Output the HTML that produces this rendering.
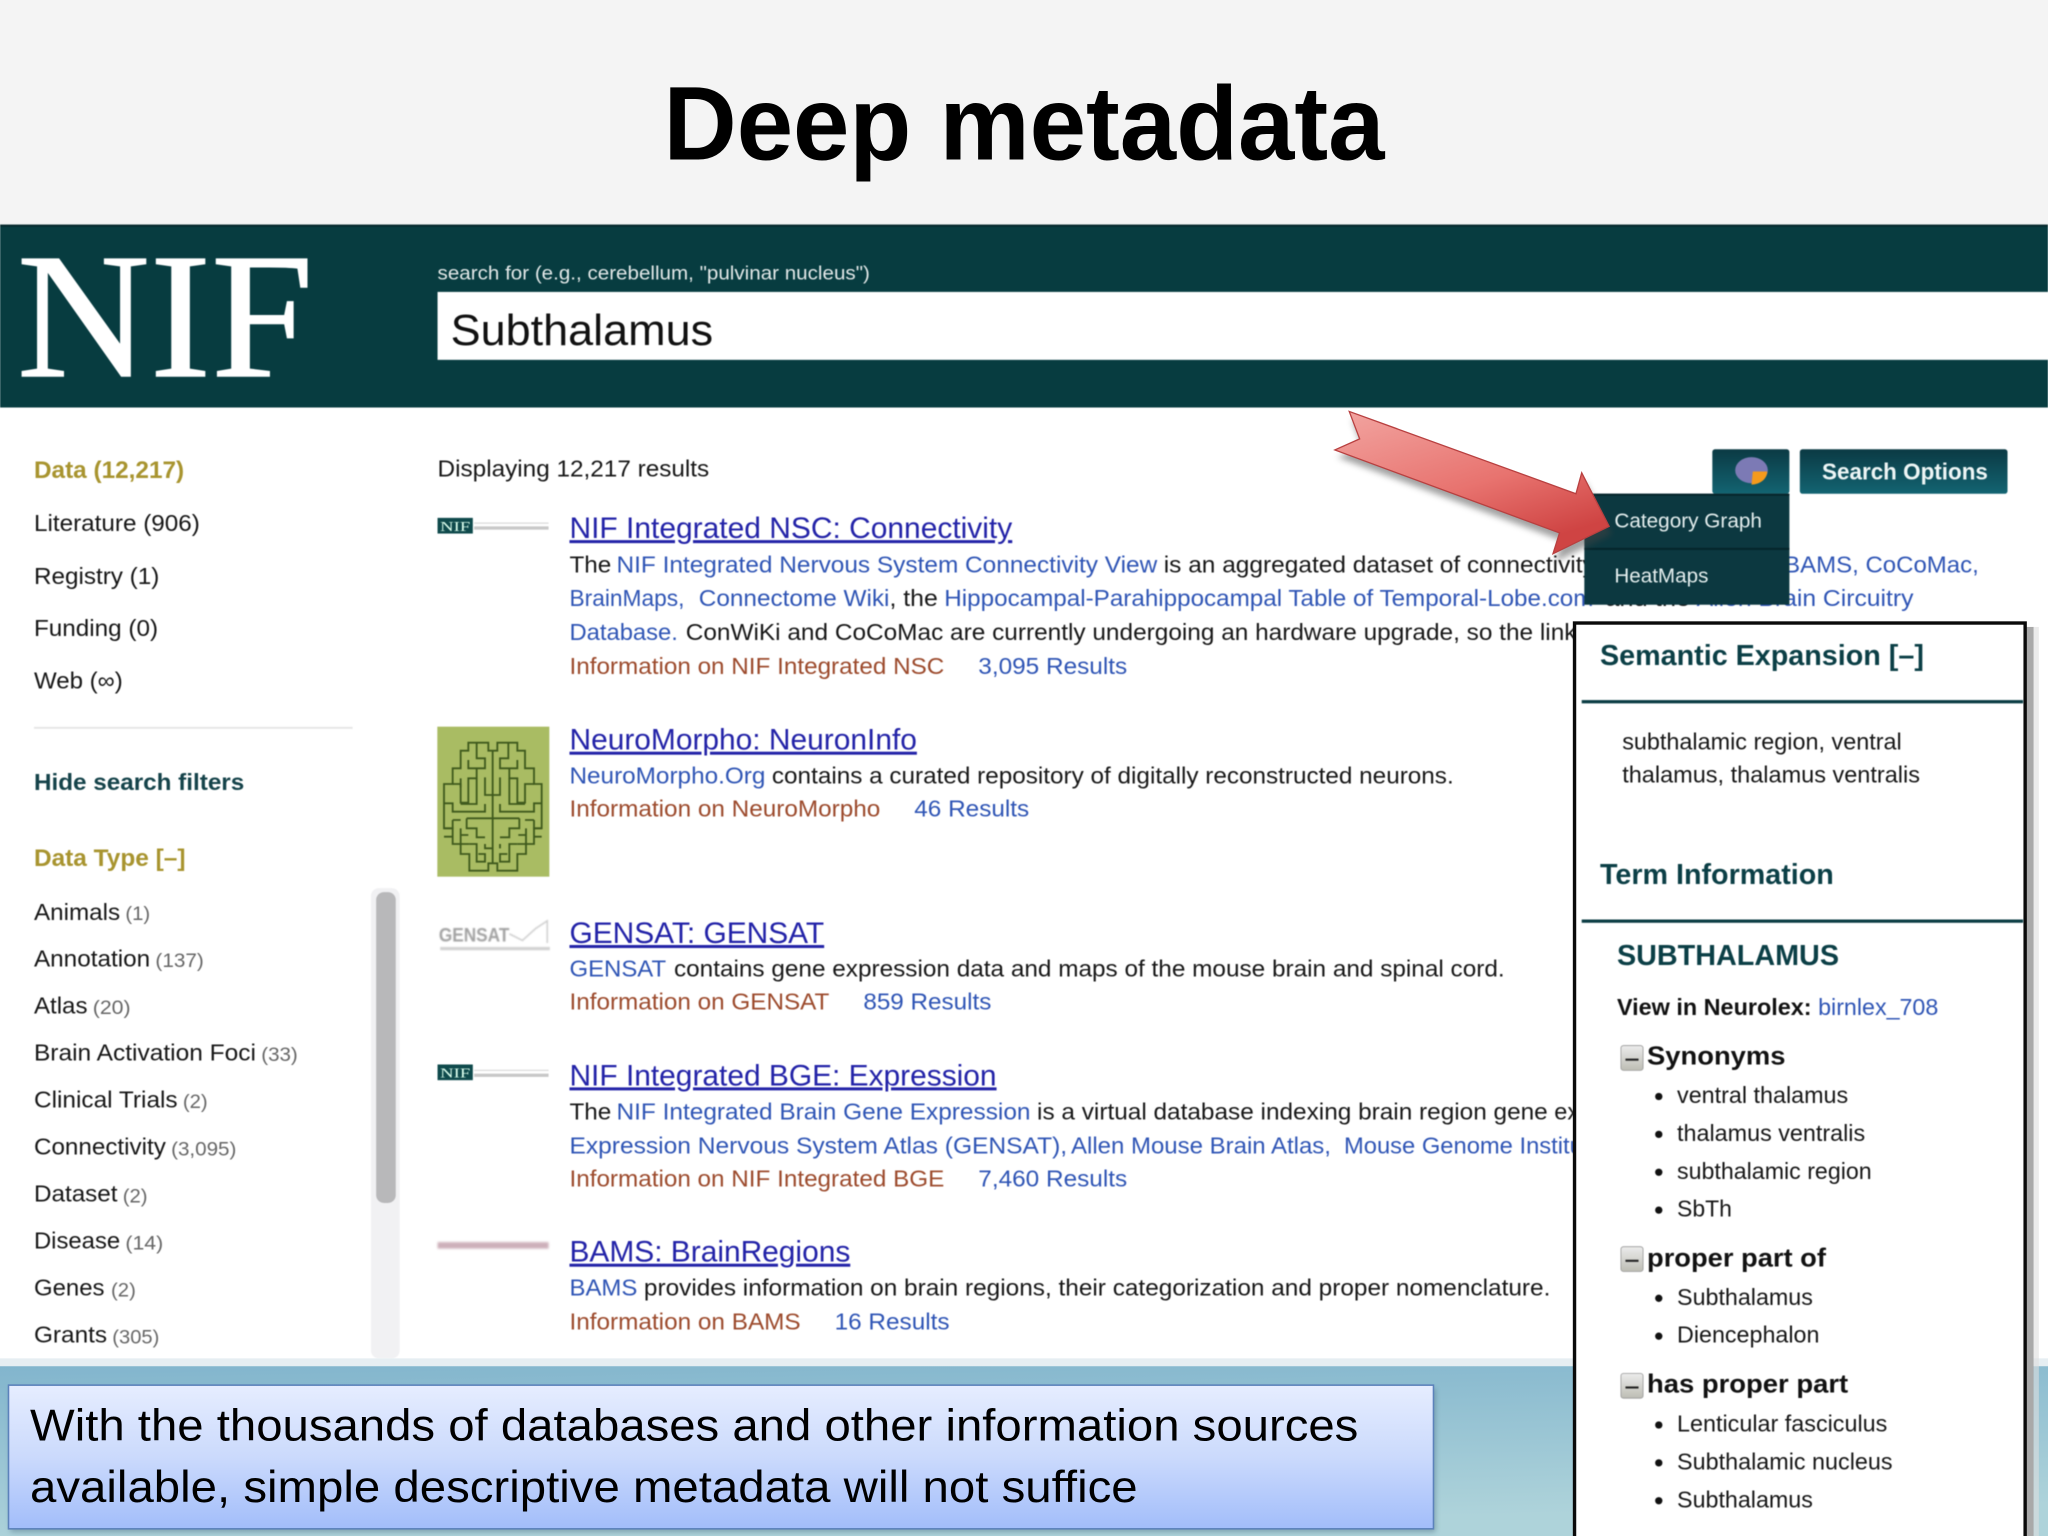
<!DOCTYPE html>
<html><head><meta charset="utf-8"><title>Deep metadata</title>
<style>
html,body{margin:0;padding:0;background:#fff;width:2048px;height:1536px;overflow:hidden}
svg{display:block;font-family:"Liberation Sans",sans-serif}
.t{font-size:18px;fill:#171717}
.b{font-size:18px;fill:#2f55b5}
.r{font-size:18px;fill:#9c4a2c}
.h{font-size:23px;fill:#2323a8;text-decoration:underline}
.g{font-size:15px;fill:#666}
.s{font-size:18px;fill:#161616}
.y{font-size:18.5px;font-weight:bold;fill:#a8942f}
.k{font-weight:bold;fill:#0b3f46;font-size:22px}
.m{font-weight:bold;fill:#111;font-size:20px}
</style></head><body>
<svg xmlns="http://www.w3.org/2000/svg" width="2048" height="1536" viewBox="0 0 1568 1176">
<defs>
<linearGradient id="bg" x1="0" y1="0" x2="0.25" y2="1"><stop offset="0" stop-color="#82b5cd"/><stop offset="1" stop-color="#aed3da"/></linearGradient>
<linearGradient id="box" x1="0" y1="0" x2="0" y2="1"><stop offset="0" stop-color="#e6edff"/><stop offset="0.5" stop-color="#cbdafc"/><stop offset="1" stop-color="#a2bdfa"/></linearGradient>
<linearGradient id="btn" x1="0" y1="0" x2="0" y2="1"><stop offset="0" stop-color="#0b3a44"/><stop offset="1" stop-color="#136472"/></linearGradient>
<linearGradient id="arr" x1="0" y1="0" x2="0.6" y2="1"><stop offset="0" stop-color="#f2a5a1"/><stop offset="0.6" stop-color="#e8736f"/><stop offset="1" stop-color="#cf4443"/></linearGradient>
<linearGradient id="tog" x1="0" y1="0" x2="0" y2="1"><stop offset="0" stop-color="#ececec"/><stop offset="1" stop-color="#bdbdb4"/></linearGradient>
</defs>

<rect width="1568" height="1176" fill="#fff"/>
<rect width="1568" height="172" fill="#f4f4f4"/>
<text x="508" y="122" font-size="80" font-weight="bold" fill="#000" textLength="552" lengthAdjust="spacingAndGlyphs">Deep metadata</text>

<g style="filter:blur(.45px)">
<rect y="172" width="1568" height="140" fill="#073c40"/>
<rect y="172" width="1568" height="1.5" fill="#06282c"/>
<text x="13" y="288" font-family="Liberation Serif" font-size="137" fill="#fff" stroke="#fff" stroke-width="1" textLength="227" lengthAdjust="spacingAndGlyphs">NIF</text>
<text x="335" y="214" font-size="15" fill="#e2e8e8" textLength="331" lengthAdjust="spacingAndGlyphs">search for (e.g., cerebellum, "pulvinar nucleus")</text>
<rect x="335" y="223.500" width="1233" height="52" fill="#fff"/>
<text x="345" y="264" font-size="33.500" fill="#111" textLength="201" lengthAdjust="spacingAndGlyphs">Subthalamus</text>

<!-- sidebar -->
<text x="26" y="366" class="y" textLength="115" lengthAdjust="spacingAndGlyphs">Data (12,217)</text>
<text x="26" y="406.500" class="s" textLength="127" lengthAdjust="spacingAndGlyphs">Literature (906)</text>
<text x="26" y="447" class="s" textLength="96" lengthAdjust="spacingAndGlyphs">Registry (1)</text>
<text x="26" y="487" class="s" textLength="95" lengthAdjust="spacingAndGlyphs">Funding (0)</text>
<text x="26" y="527" class="s" textLength="68" lengthAdjust="spacingAndGlyphs">Web (∞)</text>
<rect x="26" y="556.500" width="244" height="1.500" fill="#e6e6e6"/>
<text x="26" y="605" font-size="18" font-weight="bold" fill="#15434a" textLength="161" lengthAdjust="spacingAndGlyphs">Hide search filters</text>
<text x="26" y="663" class="y" textLength="116" lengthAdjust="spacingAndGlyphs">Data Type [–]</text>

<text x="26" y="704.500" class="s" textLength="66" lengthAdjust="spacingAndGlyphs">Animals</text><text x="96" y="704.500" class="g" textLength="19" lengthAdjust="spacingAndGlyphs">(1)</text>
<text x="26" y="740" class="s" textLength="89" lengthAdjust="spacingAndGlyphs">Annotation</text><text x="119" y="740.500" class="g" textLength="37" lengthAdjust="spacingAndGlyphs">(137)</text>
<text x="26" y="776" class="s" textLength="41" lengthAdjust="spacingAndGlyphs">Atlas</text><text x="71" y="776.500" class="g" textLength="29" lengthAdjust="spacingAndGlyphs">(20)</text>
<text x="26" y="812" class="s" textLength="170" lengthAdjust="spacingAndGlyphs">Brain Activation Foci</text><text x="200" y="812.500" class="g" textLength="28" lengthAdjust="spacingAndGlyphs">(33)</text>
<text x="26" y="848" class="s" textLength="110" lengthAdjust="spacingAndGlyphs">Clinical Trials</text><text x="140" y="848.500" class="g" textLength="19" lengthAdjust="spacingAndGlyphs">(2)</text>
<text x="26" y="884" class="s" textLength="101" lengthAdjust="spacingAndGlyphs">Connectivity</text><text x="131" y="884.500" class="g" textLength="50" lengthAdjust="spacingAndGlyphs">(3,095)</text>
<text x="26" y="920" class="s" textLength="64" lengthAdjust="spacingAndGlyphs">Dataset</text><text x="94" y="920.500" class="g" textLength="19" lengthAdjust="spacingAndGlyphs">(2)</text>
<text x="26" y="956" class="s" textLength="66" lengthAdjust="spacingAndGlyphs">Disease</text><text x="96" y="956.500" class="g" textLength="29" lengthAdjust="spacingAndGlyphs">(14)</text>
<text x="26" y="992" class="s" textLength="54" lengthAdjust="spacingAndGlyphs">Genes</text><text x="85" y="992.500" class="g" textLength="19" lengthAdjust="spacingAndGlyphs">(2)</text>
<text x="26" y="1028" class="s" textLength="56" lengthAdjust="spacingAndGlyphs">Grants</text><text x="86" y="1028.500" class="g" textLength="36" lengthAdjust="spacingAndGlyphs">(305)</text>

<rect x="284" y="680" width="22" height="360" rx="6" fill="#f1f1f3"/>
<rect x="288" y="683" width="15" height="238" rx="6" fill="#b8b8ba"/>

<!-- results -->
<text x="335" y="365" class="t" textLength="208" lengthAdjust="spacingAndGlyphs">Displaying 12,217 results</text>

<rect x="335" y="396.500" width="27" height="12" fill="#0f4a4c"/>
<text x="337" y="406.500" font-family="Liberation Serif" font-size="10.500" fill="#dfe" textLength="23" lengthAdjust="spacingAndGlyphs">NIF</text>
<rect x="363" y="400" width="57" height="1" fill="#dcdcdc"/><rect x="363" y="403" width="57" height="2.500" fill="#c8c8c8"/>
<text x="436" y="412" class="h" textLength="339" lengthAdjust="spacingAndGlyphs">NIF Integrated NSC: Connectivity</text>
<text x="436" y="438.500" class="t" textLength="32" lengthAdjust="spacingAndGlyphs">The</text>
<text x="472" y="438.500" class="b" textLength="414" lengthAdjust="spacingAndGlyphs">NIF Integrated Nervous System Connectivity View</text>
<text x="891" y="438.500" class="t" textLength="330" lengthAdjust="spacingAndGlyphs">is an aggregated dataset of connectivity</text>
<text x="1366" y="438.500" class="b" textLength="149" lengthAdjust="spacingAndGlyphs">BAMS, CoCoMac,</text>
<text x="436" y="464" class="b" textLength="88" lengthAdjust="spacingAndGlyphs">BrainMaps,</text>
<text x="535" y="464" class="b" textLength="146" lengthAdjust="spacingAndGlyphs">Connectome Wiki</text>
<text x="681" y="464" class="t" textLength="37" lengthAdjust="spacingAndGlyphs">, the</text>
<text x="723" y="464" class="b" textLength="497" lengthAdjust="spacingAndGlyphs">Hippocampal-Parahippocampal Table of Temporal-Lobe.com</text>
<text x="1229" y="464" class="t" textLength="65" lengthAdjust="spacingAndGlyphs">and the</text>
<text x="1299" y="464" class="b" textLength="166" lengthAdjust="spacingAndGlyphs">Allen Brain Circuitry</text>
<text x="436" y="490" class="b" textLength="83" lengthAdjust="spacingAndGlyphs">Database.</text>
<text x="525" y="490" class="t" textLength="682" lengthAdjust="spacingAndGlyphs">ConWiKi and CoCoMac are currently undergoing an hardware upgrade, so the link</text>
<text x="436" y="516" class="r" textLength="287" lengthAdjust="spacingAndGlyphs">Information on NIF Integrated NSC</text>
<text x="749" y="516" class="b" textLength="114" lengthAdjust="spacingAndGlyphs">3,095 Results</text>

<svg x="321.560" y="535.940" width="153.130" height="153.130" viewBox="0 0 600 600">
<rect x="52" y="80" width="336" height="450" fill="#a9bc63"/>
<g fill="none" stroke="#3f5a1d" stroke-width="5.500">
<path d="M218 150V490M145 128H205V152H232V128H292V152H315V205H342V252H365V385H342V432H318V462H292V512H232V490H205V512H148V462H122V432H98V385H72V252H98V205H122V152H145Z"/>
<path d="M170 128V175H195V205H145V180M265 128V175H240V205H292V180"/>
<path d="M98 252H122V308H145V235H170V205M342 252H315V308H292V235H268V205"/>
<path d="M122 235V262M195 232V285H218M240 232V285H218M170 235V312H122M268 235V312H315"/>
<path d="M72 310H98V335H195V312M365 310H342V335H240V312"/>
<path d="M72 385H98V360M365 385H342V360M122 360H98M315 360H342"/>
<path d="M140 355H218M298 355H218M140 355V385H170V412H195M298 355V385H268V412H240"/>
<path d="M122 385V432H148M318 385V432H292M122 405H145M318 405H295"/>
<path d="M148 432H170V485H195V462H175M292 432H268V485H240V462H262M195 432V445H218M240 432V445"/>
<path d="M98 410H72M342 410H365"/>
</g>
</svg>
<text x="436" y="574" class="h" textLength="266" lengthAdjust="spacingAndGlyphs">NeuroMorpho: NeuronInfo</text>
<text x="436" y="600" class="b" textLength="150" lengthAdjust="spacingAndGlyphs">NeuroMorpho.Org</text>
<text x="591" y="600" class="t" textLength="522" lengthAdjust="spacingAndGlyphs">contains a curated repository of digitally reconstructed neurons.</text>
<text x="436" y="625" class="r" textLength="238" lengthAdjust="spacingAndGlyphs">Information on NeuroMorpho</text>
<text x="700" y="625" class="b" textLength="88" lengthAdjust="spacingAndGlyphs">46 Results</text>

<g style="filter:blur(.5px)">
<text x="336" y="721" font-size="14.500" font-weight="bold" fill="#a2a2a2" textLength="54" lengthAdjust="spacingAndGlyphs">GENSAT</text>
<path d="M390 715L400 720L410 711L419 705V722" fill="none" stroke="#cfcfcf" stroke-width="1.200"/>
<rect x="337" y="725" width="84" height="2.500" fill="#d2d2d2"/>
</g>
<text x="436" y="722" class="h" textLength="195" lengthAdjust="spacingAndGlyphs">GENSAT: GENSAT</text>
<text x="436" y="747.500" class="b" textLength="74" lengthAdjust="spacingAndGlyphs">GENSAT</text>
<text x="516" y="747.500" class="t" textLength="636" lengthAdjust="spacingAndGlyphs">contains gene expression data and maps of the mouse brain and spinal cord.</text>
<text x="436" y="773" class="r" textLength="199" lengthAdjust="spacingAndGlyphs">Information on GENSAT</text>
<text x="661" y="773" class="b" textLength="98" lengthAdjust="spacingAndGlyphs">859 Results</text>

<rect x="335" y="815" width="27" height="12" fill="#0f4a4c"/>
<text x="337" y="825" font-family="Liberation Serif" font-size="10.500" fill="#dfe" textLength="23" lengthAdjust="spacingAndGlyphs">NIF</text>
<rect x="363" y="819" width="57" height="1" fill="#dcdcdc"/><rect x="363" y="822" width="57" height="2.500" fill="#c8c8c8"/>
<text x="436" y="831" class="h" textLength="327" lengthAdjust="spacingAndGlyphs">NIF Integrated BGE: Expression</text>
<text x="436" y="857" class="t" textLength="32" lengthAdjust="spacingAndGlyphs">The</text>
<text x="472" y="857" class="b" textLength="317" lengthAdjust="spacingAndGlyphs">NIF Integrated Brain Gene Expression</text>
<text x="794" y="857" class="t" textLength="391" lengthAdjust="spacingAndGlyphs">is a virtual database indexing brain region gene</text>
<text x="1190" y="857" class="t">expression</text>
<text x="436" y="883" class="b" textLength="381" lengthAdjust="spacingAndGlyphs">Expression Nervous System Atlas (GENSAT),</text>
<text x="820" y="883" class="b" textLength="199" lengthAdjust="spacingAndGlyphs">Allen Mouse Brain Atlas,</text>
<text x="1029" y="883" class="b" textLength="198" lengthAdjust="spacingAndGlyphs">Mouse Genome Institute</text>
<text x="436" y="908.500" class="r" textLength="287" lengthAdjust="spacingAndGlyphs">Information on NIF Integrated BGE</text>
<text x="749" y="908.500" class="b" textLength="114" lengthAdjust="spacingAndGlyphs">7,460 Results</text>

<rect x="335" y="951" width="85" height="5" fill="#cdb0ba" style="filter:blur(.8px)"/>
<text x="436" y="966" class="h" textLength="215" lengthAdjust="spacingAndGlyphs">BAMS: BrainRegions</text>
<text x="436" y="992" class="b" textLength="52" lengthAdjust="spacingAndGlyphs">BAMS</text>
<text x="493" y="992" class="t" textLength="694" lengthAdjust="spacingAndGlyphs">provides information on brain regions, their categorization and proper nomenclature.</text>
<text x="436" y="1018" class="r" textLength="177" lengthAdjust="spacingAndGlyphs">Information on BAMS</text>
<text x="639" y="1018" class="b" textLength="88" lengthAdjust="spacingAndGlyphs">16 Results</text>

<!-- buttons -->
<rect x="1311" y="344" width="59" height="34" rx="2" fill="url(#btn)"/>
<ellipse cx="1341" cy="360" rx="12.500" ry="10" fill="#7c7ab5"/>
<path d="M1341 371C1347 371 1353 367 1353 361L1342 361Z" fill="#f59a1c"/>
<rect x="1378" y="344" width="159" height="34" rx="2" fill="url(#btn)"/>
<text x="1395" y="367" font-size="18" font-weight="bold" fill="#eef6f6" textLength="127" lengthAdjust="spacingAndGlyphs">Search Options</text>

<rect x="1213" y="378" width="157" height="85" fill="#0c3840"/>
<rect x="1213" y="378" width="157" height="1.500" fill="#05242a"/>
<rect x="1213" y="419.500" width="157" height="1.500" fill="#05242a"/>
<text x="1236" y="404" font-size="15.500" fill="#e4eeee" textLength="113" lengthAdjust="spacingAndGlyphs">Category Graph</text>
<text x="1236" y="446" font-size="15.500" fill="#e4eeee" textLength="72" lengthAdjust="spacingAndGlyphs">HeatMaps</text>
</g>

<!-- bottom background -->
<rect y="1040" width="1568" height="6" fill="#e6eef2"/>
<rect y="1046" width="1568" height="130" fill="url(#bg)"/>

<!-- arrow -->
<polygon points="1035,321 1043,342 1024,350 1196,414 1191,430 1234,409 1213,368 1209,384" fill="#444" opacity=".5" style="filter:blur(2.500px)"/>
<polygon points="1033,315 1041,336 1022,344.500 1194,408 1189,424 1232,403 1211,362 1206.600,378" fill="url(#arr)" stroke="#b84040" stroke-width="1"/>

<!-- panel -->
<rect x="1551" y="480" width="6" height="696" fill="#a9a9a9"/>
<rect x="1557" y="480" width="4" height="696" fill="#dedede" opacity=".6"/>
<rect x="1205.500" y="477" width="345" height="720" fill="#fff" stroke="#0a0a0a" stroke-width="2.600"/>
<g style="filter:blur(.4px)">
<text x="1225" y="509" class="k" textLength="248" lengthAdjust="spacingAndGlyphs">Semantic Expansion [–]</text>
<rect x="1211" y="536" width="338" height="2.500" fill="#0b3d44"/>
<text x="1242" y="574" class="s" textLength="214" lengthAdjust="spacingAndGlyphs">subthalamic region, ventral</text>
<text x="1242" y="599" class="s" textLength="228" lengthAdjust="spacingAndGlyphs">thalamus, thalamus ventralis</text>
<text x="1225" y="677" class="k" textLength="179" lengthAdjust="spacingAndGlyphs">Term Information</text>
<rect x="1211" y="704" width="338" height="2.500" fill="#0b3d44"/>
<text x="1238" y="739" class="k" textLength="170" lengthAdjust="spacingAndGlyphs">SUBTHALAMUS</text>
<text x="1238" y="777" font-size="18" font-weight="bold" fill="#111" textLength="149" lengthAdjust="spacingAndGlyphs">View in Neurolex:</text>
<text x="1392" y="777" class="b" textLength="92" lengthAdjust="spacingAndGlyphs">birnlex_708</text>

<rect x="1241" y="800.500" width="17" height="19" rx="2" fill="url(#tog)" stroke="#999" stroke-width=".6"/><rect x="1244.500" y="810.500" width="10" height="1.600" fill="#222"/>
<text x="1261" y="815" class="m" textLength="106" lengthAdjust="spacingAndGlyphs">Synonyms</text>
<circle cx="1270" cy="839.500" r="2.800" fill="#111"/><text x="1284" y="844.500" class="s" textLength="131" lengthAdjust="spacingAndGlyphs">ventral thalamus</text>
<circle cx="1270" cy="868.500" r="2.800" fill="#111"/><text x="1284" y="873.500" class="s" textLength="144" lengthAdjust="spacingAndGlyphs">thalamus ventralis</text>
<circle cx="1270" cy="897.500" r="2.800" fill="#111"/><text x="1284" y="902.500" class="s" textLength="149" lengthAdjust="spacingAndGlyphs">subthalamic region</text>
<circle cx="1270" cy="926.500" r="2.800" fill="#111"/><text x="1284" y="931.500" class="s" textLength="42" lengthAdjust="spacingAndGlyphs">SbTh</text>

<rect x="1241" y="954.500" width="17" height="19" rx="2" fill="url(#tog)" stroke="#999" stroke-width=".6"/><rect x="1244.500" y="964.500" width="10" height="1.600" fill="#222"/>
<text x="1261" y="969.500" class="m" textLength="137" lengthAdjust="spacingAndGlyphs">proper part of</text>
<circle cx="1270" cy="994" r="2.800" fill="#111"/><text x="1284" y="999" class="s" textLength="104" lengthAdjust="spacingAndGlyphs">Subthalamus</text>
<circle cx="1270" cy="1023" r="2.800" fill="#111"/><text x="1284" y="1028" class="s" textLength="109" lengthAdjust="spacingAndGlyphs">Diencephalon</text>

<rect x="1241" y="1051.500" width="17" height="19" rx="2" fill="url(#tog)" stroke="#999" stroke-width=".6"/><rect x="1244.500" y="1061.500" width="10" height="1.600" fill="#222"/>
<text x="1261" y="1066" class="m" textLength="154" lengthAdjust="spacingAndGlyphs">has proper part</text>
<circle cx="1270" cy="1091" r="2.800" fill="#111"/><text x="1284" y="1096" class="s" textLength="161" lengthAdjust="spacingAndGlyphs">Lenticular fasciculus</text>
<circle cx="1270" cy="1120" r="2.800" fill="#111"/><text x="1284" y="1125" class="s" textLength="165" lengthAdjust="spacingAndGlyphs">Subthalamic nucleus</text>
<circle cx="1270" cy="1149" r="2.800" fill="#111"/><text x="1284" y="1154" class="s" textLength="104" lengthAdjust="spacingAndGlyphs">Subthalamus</text>
</g>

<!-- caption box -->
<rect x="8" y="1063" width="1091" height="110" fill="#3a5a70" opacity=".4" style="filter:blur(2px)"/>
<rect x="6.500" y="1060.500" width="1091" height="110" fill="url(#box)" stroke="#5c82bb" stroke-width="1.200"/>
<text x="23" y="1103" font-size="34" fill="#000" textLength="1017" lengthAdjust="spacingAndGlyphs">With the thousands of databases and other information sources</text>
<text x="23" y="1150" font-size="34" fill="#000" textLength="848" lengthAdjust="spacingAndGlyphs">available, simple descriptive metadata will not suffice</text>
</svg>
</body></html>
